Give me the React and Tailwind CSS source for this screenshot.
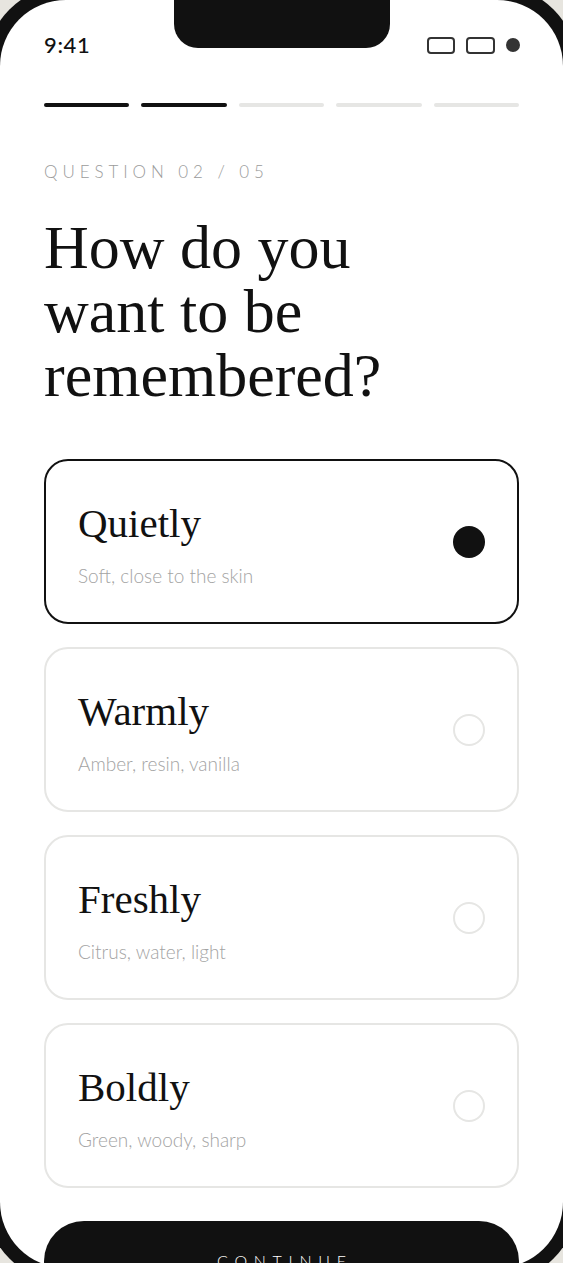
import React, { useState } from "react";

const options = [
  { title: "Quietly", note: "Soft, close to the skin" },
  { title: "Warmly", note: "Amber, resin, vanilla" },
  { title: "Freshly", note: "Citrus, water, light" },
  { title: "Boldly", note: "Green, woody, sharp" },
];

const serif = { fontFamily: '"Liberation Serif", "Times New Roman", serif' };

const StatusBar = () => (
  <div className="flex h-[26px] items-center justify-between px-[44px] pr-[43px] mt-[32px]">
    <span className="text-[22px] font-medium text-[#111] tracking-[0.03em] leading-none">9:41</span>
    <div className="flex items-center gap-[11px]">
      <span className="block h-[17px] w-[28px] rounded-[4px] border-2 border-[#333]" />
      <span className="block h-[17px] w-[29px] rounded-[4px] border-2 border-[#333]" />
      <span className="block h-[14px] w-[14px] rounded-full bg-[#333]" />
    </div>
  </div>
);

const Progress = ({ step, total }) => (
  <div className="mt-[45px] flex gap-[12px] px-[44px]">
    {Array.from({ length: total }).map((_, i) => (
      <div
        key={i}
        className={
          i < step
            ? "h-[4px] flex-1 rounded-full bg-[#111]"
            : "h-[4px] flex-1 rounded-full bg-[#e6e6e4]"
        }
      />
    ))}
  </div>
);

const OptionCard = ({ title, note, selected, onSelect }) => (
  <button
    onClick={onSelect}
    className={
      selected
        ? "flex h-[165px] w-full items-center justify-between rounded-[24px] border-2 border-[#111] px-[32px] text-left"
        : "flex h-[165px] w-full items-center justify-between rounded-[24px] border-2 border-[#e6e6e4] px-[32px] text-left"
    }
  >
    <div className="pt-[4px]">
      <div className="text-[41px] leading-[44px] text-[#111]" style={serif}>
        {title}
      </div>
      <div className="mt-[20px] text-[19px] font-light leading-[22px] text-[#a3a3a3]">{note}</div>
    </div>
    {selected ? (
      <span className="block h-[32px] w-[32px] rounded-full bg-[#111]" />
    ) : (
      <span className="block h-[32px] w-[32px] rounded-full border-2 border-[#e6e6e4]" />
    )}
  </button>
);

export default function App() {
  const [picked, setPicked] = useState(0);

  return (
    <div
      className="h-[1263px] w-full overflow-hidden bg-[#e7e5df]"
      style={{ fontFamily: '"Lato", "Noto Sans", sans-serif' }}
    >
      {/* device frame */}
      <div className="-ml-[14px] -mt-[14px] w-[591px] rounded-[80px] bg-[#111] p-[14px]">
        <div className="relative h-[1268px] overflow-hidden rounded-[66px] bg-white">
          <div className="absolute left-1/2 top-0 h-[48px] w-[216px] -translate-x-1/2 rounded-b-[24px] bg-[#111]" />

          <StatusBar />
          <Progress step={2} total={5} />

          <div className="px-[44px]">
            <p className="mt-[55px] text-[17px] font-light leading-[20px] tracking-[0.29em] text-[#9b9b9b]">
              QUESTION 02 / 05
            </p>
            <h1 className="mt-[33px] text-[62px] font-normal leading-[64px] text-[#111]" style={serif}>
              How do you
              <br />
              want to be
              <br />
              remembered?
            </h1>

            <div className="mt-[52px] flex flex-col gap-[23px]">
              {options.map((o, i) => (
                <OptionCard
                  key={o.title}
                  title={o.title}
                  note={o.note}
                  selected={picked === i}
                  onSelect={() => setPicked(i)}
                />
              ))}
            </div>

            <button className="mt-[33px] flex h-[80px] w-full items-center justify-center rounded-full bg-[#111] pl-[0.42em] text-[16px] font-light tracking-[0.42em] text-white">
              CONTINUE
            </button>
          </div>
        </div>
      </div>
    </div>
  );
}
